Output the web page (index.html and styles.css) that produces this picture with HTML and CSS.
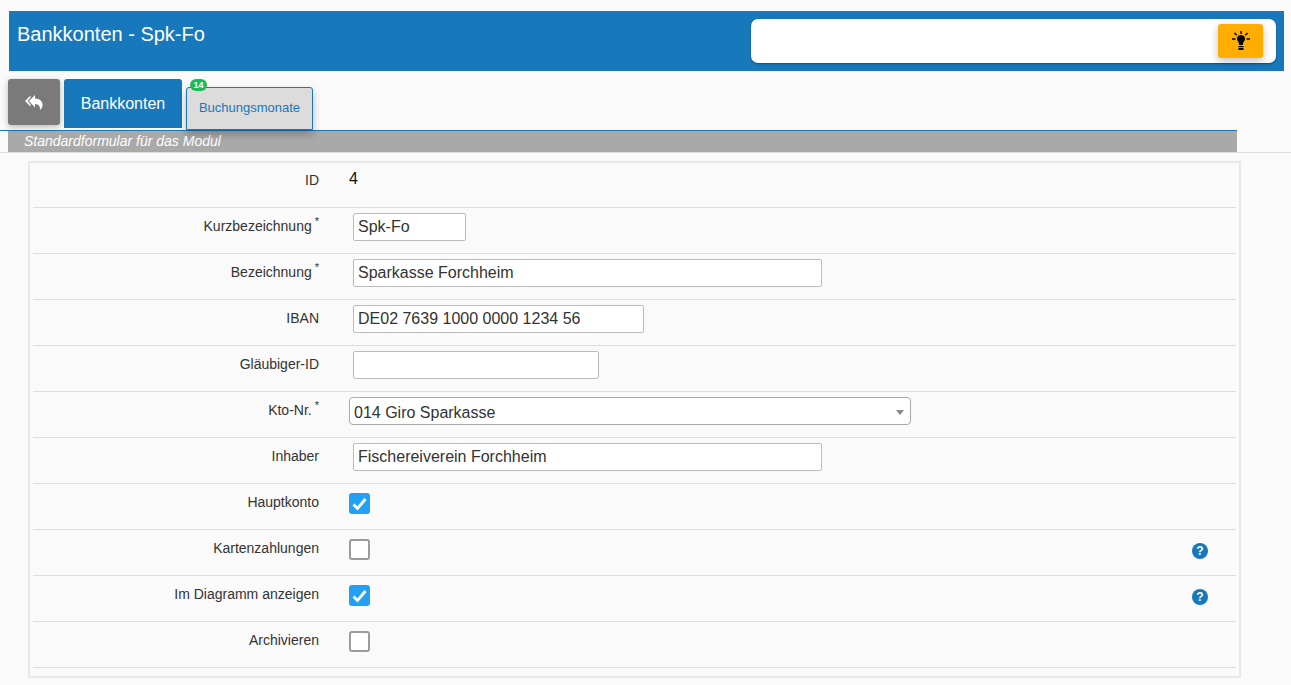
FILE: index.html
```html
<!DOCTYPE html>
<html lang="de">
<head>
    <meta charset="UTF-8">
    <meta name="viewport" content="width=device-width, initial-scale=1.0">
    <title>Bankkonten - Spk-Fo</title>
    <link rel="stylesheet" href="styles.css">
</head>
<body>
    <header class="top">
        <h1 class="title">Bankkonten - Spk-Fo</h1>
        <div class="search">
            <button class="hint" type="button">
                <svg width="20" height="20" viewBox="0 0 20 20">
                    <path d="M10 4C7.500 4 6 5.700 6 7.700c0 1.500.9 2.500 1.500 3.500.4.700.6 1.400.7 2.800h3.600c.1-1.400.3-2.100.7-2.800.6-1 1.500-2 1.500-3.500C14 5.700 12.500 4 10 4z" fill="#000"/>
                    <path d="M7.500 15h5v1.200h-5zM7.500 17h5v2h-5z" fill="#000"/>
                    <path d="M10 0v3M3.500 2l2.200 2.300M16.500 2l-2.200 2.300M1 8h3.500M15.500 8H19" stroke="#000" stroke-width="1.400" fill="none"/>
                </svg>
            </button>
        </div>
    </header>

    <nav class="tabs">
        <a class="back" href="#">
            <svg width="18" height="17" viewBox="0 0 18 17">
                <path d="M5.500 1.500v2.200L2.600 7l2.900 3.300v2.200L0 7z" fill="#fff"/>
                <path d="M10 1v3.400c4.500.2 7.600 2.500 7.600 6.400 0 2.300-1.200 4.100-2.700 5.200.6-3.300-1-5.700-4.900-5.900V13.500L4 7z" fill="#fff"/>
            </svg>
        </a>
        <a class="tab tab-active" href="#">Bankkonten</a>
        <a class="tab tab-other" href="#">Buchungsmonate<span class="badge">14</span></a>
    </nav>

    <div class="subtitle">Standardformular für das Modul</div>

    <form class="form">
        <div class="row">
            <div class="lbl">ID</div>
            <div class="static">4</div>
        </div>
        <div class="row">
            <div class="lbl">Kurzbezeichnung<sup>*</sup></div>
            <input class="inp w-s" type="text" value="Spk-Fo">
        </div>
        <div class="row">
            <div class="lbl">Bezeichnung<sup>*</sup></div>
            <input class="inp w-l" type="text" value="Sparkasse Forchheim">
        </div>
        <div class="row">
            <div class="lbl">IBAN</div>
            <input class="inp w-iban" type="text" value="DE02 7639 1000 0000 1234 56">
        </div>
        <div class="row">
            <div class="lbl">Gläubiger-ID</div>
            <input class="inp w-m" type="text" value="">
        </div>
        <div class="row">
            <div class="lbl">Kto-Nr.<sup>*</sup></div>
            <div class="select">014 Giro Sparkasse<span class="arrow"></span></div>
        </div>
        <div class="row">
            <div class="lbl">Inhaber</div>
            <input class="inp w-l" type="text" value="Fischereiverein Forchheim">
        </div>
        <div class="row">
            <div class="lbl">Hauptkonto</div>
            <span class="check on">
                <svg width="15" height="14" viewBox="0 0 15 14"><path d="M1.500 7.500l4 4L13.500 2" fill="none" stroke="#fff" stroke-width="2.800"/></svg>
            </span>
        </div>
        <div class="row">
            <div class="lbl">Kartenzahlungen</div>
            <span class="check"></span>
            <span class="help">?</span>
        </div>
        <div class="row">
            <div class="lbl">Im Diagramm anzeigen</div>
            <span class="check on">
                <svg width="15" height="14" viewBox="0 0 15 14"><path d="M1.500 7.500l4 4L13.500 2" fill="none" stroke="#fff" stroke-width="2.800"/></svg>
            </span>
            <span class="help">?</span>
        </div>
        <div class="row">
            <div class="lbl">Archivieren</div>
            <span class="check"></span>
        </div>
    </form>
</body>
</html>
```

FILE: styles.css
```css
*{
    box-sizing: border-box;
}
html,body{
    margin: 0;
    padding: 0;
    height: 685px;
    overflow: hidden;
}
body{
    background-color: #fafafa;
    font-family: "Liberation Sans", Arial, sans-serif;
    color: #333;
}
/* Kopfzeile */
.top{
    display: flex;
    justify-content: space-between;
    margin: 11px 7px 0 9px;
    height: 60px;
    padding: 8px;
    background-color: #1778bc;
}
.title{
    margin: 0;
    font-size: 20px;
    font-weight: normal;
    line-height: 30px;
    color: #fff;
}
.search{
    display: flex;
    align-items: center;
    justify-content: flex-end;
    width: 525px;
    height: 44px;
    padding-right: 13px;
    background-color: #fff;
    border-radius: 7px;
    box-shadow: 0 1px 2px rgba(0,0,0,.35);
}
.hint{
    display: flex;
    align-items: center;
    justify-content: center;
    width: 45px;
    height: 34px;
    padding: 0;
    border: 0;
    border-radius: 3px;
    background-color: #ffad00;
    box-shadow: 0 3px 8px rgba(0,0,0,.25);
}
/* Reiter */
.tabs{
    display: flex;
    align-items: flex-start;
    gap: 4px;
    height: 52px;
    margin: 8px 54px 0 0;
    padding-left: 8px;
    border-bottom: 1px solid #1778bc;
}
.back{
    display: flex;
    align-items: center;
    justify-content: center;
    width: 52px;
    height: 46px;
    border-radius: 3px;
    background-color: #7a7a7a;
    box-shadow: 0 2px 6px rgba(0,0,0,.25);
}
.tab{
    display: block;
    text-align: center;
    text-decoration: none;
}
.tab-active{
    width: 118px;
    height: 49px;
    line-height: 50px;
    font-size: 16px;
    color: #fff;
    background-color: #1778bc;
    border-radius: 3px 3px 0 0;
}
.tab-other{
    position: relative;
    width: 127px;
    height: 43px;
    margin-top: 8px;
    line-height: 40px;
    font-size: 13px;
    color: #1778bc;
    background-color: #dcdcdc;
    border: 1px solid #1778bc;
    border-radius: 3px 3px 0 0;
    box-shadow: 0 4px 8px rgba(0,0,0,.25);
}
.badge{
    position: absolute;
    top: -9px;
    left: 3px;
    width: 17px;
    height: 12px;
    border-radius: 6px;
    background-color: #1eb95a;
    color: #fff;
    font-size: 9px;
    font-weight: bold;
    line-height: 12px;
}
.subtitle{
    height: 21px;
    margin: 0 54px 0 8px;
    padding-left: 16px;
    background-color: #a9a9a9;
    color: #fff;
    font-size: 14px;
    font-style: italic;
    line-height: 21px;
}
/* Formular */
.form{
    position: relative;
    height: 517px;
    margin: 9px 50px 0 28px;
    padding: 0 3px;
    border: 2px solid #e8e8e8;
}
/* Trennlinie unter dem Titel */
.form::before{
    content: "";
    position: absolute;
    top: -11px;
    left: -30px;
    right: -52px;
    height: 1px;
    background-color: #ddd;
}
.row{
    display: flex;
    align-items: flex-start;
    height: 46px;
    padding-top: 5px;
    border-bottom: 1px solid #dedede;
}
.row:first-child{
    height: 45px;
    padding-top: 0;
}
.lbl{
    flex: none;
    width: 286px;
    margin-right: 30px;
    padding-top: 5px;
    font-size: 14px;
    line-height: 16px;
    text-align: right;
    color: #333;
}
.row:first-child .lbl{
    padding-top: 9px;
}
.lbl sup{
    margin-left: 3px;
    font-size: 11px;
    line-height: 0;
    vertical-align: 6px;
}
.static{
    padding-top: 7px;
    font-size: 16px;
    line-height: 18px;
    color: #111;
}
.inp{
    height: 28px;
    margin-left: 4px;
    padding: 0 4px;
    border: 1px solid #bbb;
    border-radius: 2px;
    background-color: #fff;
    font-family: "Liberation Sans", Arial, sans-serif;
    font-size: 16px;
    color: #333;
    outline: none;
}
.w-s{
    width: 113px;
}
.w-m{
    width: 246px;
}
.w-iban{
    width: 291px;
}
.w-l{
    width: 469px;
}
.select{
    position: relative;
    width: 562px;
    height: 28px;
    padding-left: 4px;
    border: 1px solid #aaa;
    border-radius: 4px;
    background-color: #fff;
    font-size: 16px;
    line-height: 29px;
    color: #333;
}
.arrow{
    position: absolute;
    top: 12px;
    right: 6px;
    border: 4px solid transparent;
    border-bottom: 0;
    border-top: 5px solid #888;
}
.check{
    display: flex;
    align-items: center;
    justify-content: center;
    width: 21px;
    height: 21px;
    margin-top: 4px;
    border: 2px solid #9a9aa0;
    border-radius: 3px;
    background-color: #fff;
}
.check.on{
    border: 0;
    background-color: #22a0f5;
}
.help{
    width: 16px;
    height: 16px;
    margin: 8px 28px 0 auto;
    border-radius: 50%;
    background-color: #1778bc;
    color: #fff;
    font-size: 12px;
    font-weight: bold;
    line-height: 16px;
    text-align: center;
}
```
